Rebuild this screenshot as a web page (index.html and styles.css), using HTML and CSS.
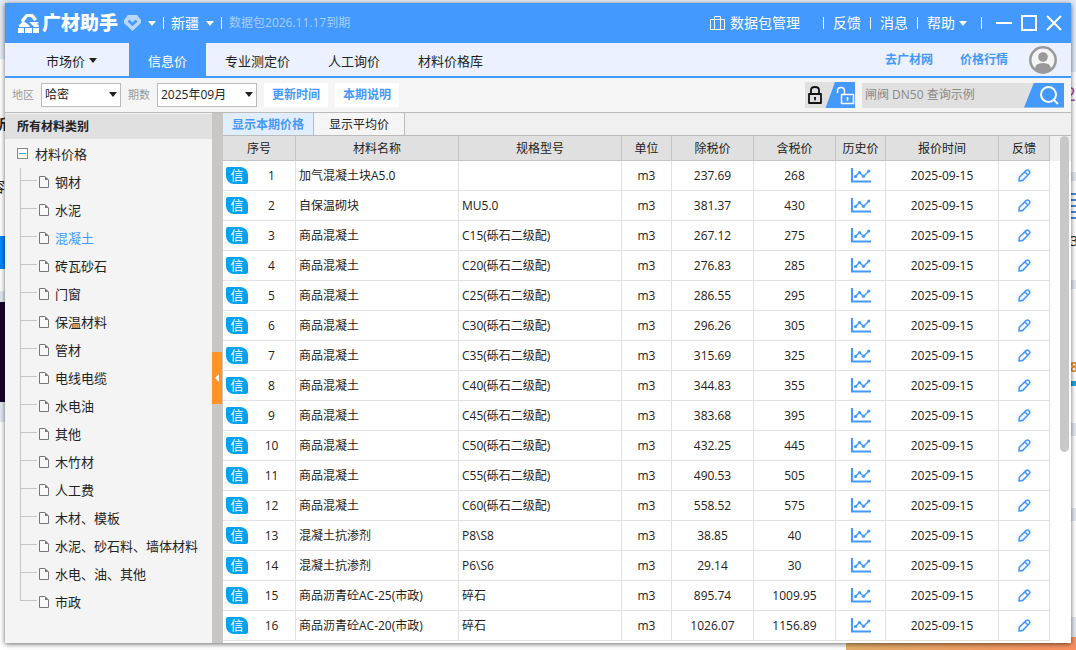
FILE: index.html
```html
<!DOCTYPE html>
<html lang="zh-CN">
<head>
    <meta charset="UTF-8">
    <meta name="viewport" content="width=device-width, initial-scale=1.0">
    <title>广材助手</title>
    <link rel="stylesheet" href="styles.css">
</head>
<body>
    <svg class="sprite" aria-hidden="true">
        <symbol id="i-file" viewBox="0 0 10 12">
            <path d="M.5.5h5.500l3.500 3.500v7.500h-9z" fill="#fff" fill-opacity=".4" stroke="#777"/>
            <path d="M6 .5v3.500h3.500z" fill="#777"/>
        </symbol>
        <symbol id="i-chart" viewBox="0 0 20 15">
            <path d="M1 0v13.500H20" fill="none" stroke="#4499ff" stroke-width="2"/>
            <path d="M4 9l4.500-4.500 4 4L18 3" fill="none" stroke="#4499ff" stroke-width="1.500"/>
            <g fill="#4499ff"><circle cx="4.500" cy="8.500" r="1.600"/><circle cx="8.500" cy="4.500" r="1.600"/><circle cx="12.500" cy="8.300" r="1.600"/><circle cx="17.800" cy="3" r="1.600"/></g>
        </symbol>
        <symbol id="i-pen" viewBox="0 0 13 13">
            <path d="M1 12l.4-3.800L8 1.600Q9.400.4 10.800 1.700 12.500 3.300 11.200 4.800L4.700 11.400zM6.800 3l3 3" fill="none" stroke="#4499ff" stroke-width="1.600" stroke-linejoin="round"/>
        </symbol>
    </svg>

    <!-- pages behind the window -->
    <div class="backdrop" aria-hidden="true">
        <div class="strip strip-left">
            <i class="sky"></i><i class="page"></i><i class="blue"></i><i class="page-sm"></i><i class="gap"></i><i class="dark"></i><i class="gap gap-lg"></i>
            <span class="bit bit-suo">所</span><span class="bit bit-rong">容</span>
        </div>
        <div class="strip strip-right">
            <i class="sky"></i><i class="card-a"></i><i class="gap-sm"></i><i class="card-b"></i><i class="gap-sm"></i><i class="card-c"></i><i class="cyan"></i><i class="card-d"></i><i class="gap-md"></i><i class="card-e"></i><i class="gap-md"></i><i class="card-f"></i><i class="gap-lg"></i>
            <span class="bit bit-two">2</span><span class="bit bit-lines"></span><span class="bit bit-three">3</span><span class="bit bit-eight">8</span>
        </div>
        <div class="banner"></div>
    </div>

    <div class="window">
        <header class="titlebar">
            <svg class="logo-mark" width="22" height="21" viewBox="0 0 22 21" fill="#fff">
                <path d="M8 1h7l4 5-2.500 2L13 4H9.500L6 8.500l5 3.500 1 2H1v-2l3-2.500L3 7z"/>
                <path d="M11 9h10l-4.500 5zM15 14l5-3 1 3zM0 15h6v5H0zM7 15h7v5H7zM15 15h6v5h-6z"/>
            </svg>
            <h1 class="brand">广材助手</h1>
            <svg class="badge" width="17" height="16" viewBox="0 0 17 16">
                <path d="M4 0h9l4 5v3l-8.500 8L0 8V5z" fill="#b9d8ff"/>
                <path d="M4.500 5.500l4 4 4-4" fill="none" stroke="#4499ff" stroke-width="2.500"/>
            </svg>
            <i class="caret"></i>
            <i class="bar"></i>
            <button class="title-btn region">新疆<i class="caret"></i></button>
            <i class="bar"></i>
            <span class="expire">数据包2026.11.17到期</span>
            <button class="title-btn manage">
                <svg width="17" height="16" viewBox="0 0 17 16" fill="none" stroke="#fff"><path d="M1.500 4.500h14v10h-14zM5.500 14.500V1.500h6v13"/></svg>
                数据包管理
            </button>
            <i class="bar"></i>
            <button class="title-btn">反馈</button>
            <i class="bar"></i>
            <button class="title-btn">消息</button>
            <i class="bar"></i>
            <button class="title-btn help">帮助<i class="caret"></i></button>
            <i class="bar"></i>
            <div class="win-controls">
                <button class="title-btn" aria-label="最小化"><svg width="16" height="16" viewBox="0 0 16 16"><path d="M0 8h16" stroke="#fff" stroke-width="2"/></svg></button>
                <button class="title-btn" aria-label="最大化"><svg width="16" height="16" viewBox="0 0 16 16"><path d="M1 1h14v14H1z" fill="none" stroke="#fff" stroke-width="2"/></svg></button>
                <button class="title-btn" aria-label="关闭"><svg width="16" height="16" viewBox="0 0 16 16"><path d="M1 1l14 14M15 1L1 15" stroke="#fff" stroke-width="2"/></svg></button>
            </div>
        </header>

        <nav class="nav">
            <a href="#" class="nav-item market">市场价<i class="caret"></i></a>
            <a href="#" class="nav-item active">信息价</a>
            <a href="#" class="nav-item">专业测定价</a>
            <a href="#" class="nav-item">人工询价</a>
            <a href="#" class="nav-item">材料价格库</a>
            <div class="nav-right">
                <a href="#" class="nav-link">去广材网</a>
                <a href="#" class="nav-link">价格行情</a>
                <svg class="avatar" width="28" height="28" viewBox="0 0 28 28">
                    <circle cx="14" cy="14" r="12.700" fill="#f4f4f4" stroke="#999" stroke-width="2.500"/>
                    <circle cx="14" cy="11" r="4.800" fill="#999"/>
                    <path d="M6 23q0-6 8-6t8 6q-3 4-8 4t-8-4z" fill="#999"/>
                </svg>
            </div>
        </nav>

        <div class="toolbar">
            <label class="field-label" for="area">地区</label>
            <div class="select-wrap area"><select id="area"><option>哈密</option></select><i class="caret"></i></div>
            <label class="field-label" for="period">期数</label>
            <div class="select-wrap period"><select id="period"><option>2025年09月</option></select><i class="caret"></i></div>
            <button class="tool-btn">更新时间</button>
            <button class="tool-btn">本期说明</button>
            <button class="lock-switch" aria-label="锁定">
                <svg width="50" height="26" viewBox="0 0 50 26">
                    <path d="M0 0h30l-9 26H0z" fill="#e0e0e0"/>
                    <path d="M30 0h20v26H20.500z" fill="#4499ff"/>
                    <path d="M4 12h12v9H4zM6 12V8q0-3 4-3t4 3v4" fill="none" stroke="#111" stroke-width="1.800" stroke-linejoin="round"/>
                    <path d="M10 15v3.500M9 16h2" stroke="#111" stroke-width="1.500"/>
                    <path d="M36.500 12.500h12v9h-12zM39.500 12.500V9q0-3.500-3.500-3.500T32.500 9v2" fill="none" stroke="#fff" stroke-width="1.500" stroke-linejoin="round"/>
                    <path d="M42.500 15v4M41.500 16.500h2" stroke="#fff" stroke-width="1.500"/>
                </svg>
            </button>
            <div class="search">
                <input type="text" placeholder="闸阀 DN50 查询示例" aria-label="查询">
                <button class="search-btn" aria-label="搜索">
                    <svg width="20" height="20" viewBox="0 0 20 20" fill="none" stroke="#fff" stroke-width="2"><circle cx="9.500" cy="9.500" r="7.500"/><path d="M14.500 14.500L19 19"/></svg>
                </button>
            </div>
        </div>

        <div class="main">
            <aside class="sidebar">
                <h2 class="side-title">所有材料类别</h2>
                <div class="tree-root"><i class="toggle"></i>材料价格</div>
                <ul class="tree">
                    <li><svg><use href="#i-file"/></svg>钢材</li>
                    <li><svg><use href="#i-file"/></svg>水泥</li>
                    <li class="current"><svg><use href="#i-file"/></svg>混凝土</li>
                    <li><svg><use href="#i-file"/></svg>砖瓦砂石</li>
                    <li><svg><use href="#i-file"/></svg>门窗</li>
                    <li><svg><use href="#i-file"/></svg>保温材料</li>
                    <li><svg><use href="#i-file"/></svg>管材</li>
                    <li><svg><use href="#i-file"/></svg>电线电缆</li>
                    <li><svg><use href="#i-file"/></svg>水电油</li>
                    <li><svg><use href="#i-file"/></svg>其他</li>
                    <li><svg><use href="#i-file"/></svg>木竹材</li>
                    <li><svg><use href="#i-file"/></svg>人工费</li>
                    <li><svg><use href="#i-file"/></svg>木材、模板</li>
                    <li><svg><use href="#i-file"/></svg>水泥、砂石料、墙体材料</li>
                    <li><svg><use href="#i-file"/></svg>水电、油、其他</li>
                    <li><svg><use href="#i-file"/></svg>市政</li>
                </ul>
            </aside>
            <div class="splitter"><button class="collapse" aria-label="收起"></button></div>
            <section class="content">
                <div class="tabs">
                    <button class="tab active">显示本期价格</button>
                    <button class="tab">显示平均价</button>
                </div>
                <div class="table-area">
                    <table class="prices">
                        <colgroup><col class="c-no"><col><col><col class="c-unit"><col class="c-price"><col class="c-price"><col class="c-hist"><col class="c-date"><col class="c-feed"></colgroup>
                        <thead>
                            <tr><th>序号</th><th>材料名称</th><th>规格型号</th><th>单位</th><th>除税价</th><th>含税价</th><th>历史价</th><th>报价时间</th><th>反馈</th></tr>
                        </thead>
                        <tbody>
                            <tr><td><div class="no"><b>信</b><span>1</span></div></td><td>加气混凝土块A5.0</td><td></td><td>m3</td><td>237.69</td><td>268</td><td><svg class="chart"><use href="#i-chart"/></svg></td><td>2025-09-15</td><td><svg class="pen"><use href="#i-pen"/></svg></td></tr>
                            <tr><td><div class="no"><b>信</b><span>2</span></div></td><td>自保温砌块</td><td>MU5.0</td><td>m3</td><td>381.37</td><td>430</td><td><svg class="chart"><use href="#i-chart"/></svg></td><td>2025-09-15</td><td><svg class="pen"><use href="#i-pen"/></svg></td></tr>
                            <tr><td><div class="no"><b>信</b><span>3</span></div></td><td>商品混凝土</td><td>C15(砾石二级配)</td><td>m3</td><td>267.12</td><td>275</td><td><svg class="chart"><use href="#i-chart"/></svg></td><td>2025-09-15</td><td><svg class="pen"><use href="#i-pen"/></svg></td></tr>
                            <tr><td><div class="no"><b>信</b><span>4</span></div></td><td>商品混凝土</td><td>C20(砾石二级配)</td><td>m3</td><td>276.83</td><td>285</td><td><svg class="chart"><use href="#i-chart"/></svg></td><td>2025-09-15</td><td><svg class="pen"><use href="#i-pen"/></svg></td></tr>
                            <tr><td><div class="no"><b>信</b><span>5</span></div></td><td>商品混凝土</td><td>C25(砾石二级配)</td><td>m3</td><td>286.55</td><td>295</td><td><svg class="chart"><use href="#i-chart"/></svg></td><td>2025-09-15</td><td><svg class="pen"><use href="#i-pen"/></svg></td></tr>
                            <tr><td><div class="no"><b>信</b><span>6</span></div></td><td>商品混凝土</td><td>C30(砾石二级配)</td><td>m3</td><td>296.26</td><td>305</td><td><svg class="chart"><use href="#i-chart"/></svg></td><td>2025-09-15</td><td><svg class="pen"><use href="#i-pen"/></svg></td></tr>
                            <tr><td><div class="no"><b>信</b><span>7</span></div></td><td>商品混凝土</td><td>C35(砾石二级配)</td><td>m3</td><td>315.69</td><td>325</td><td><svg class="chart"><use href="#i-chart"/></svg></td><td>2025-09-15</td><td><svg class="pen"><use href="#i-pen"/></svg></td></tr>
                            <tr><td><div class="no"><b>信</b><span>8</span></div></td><td>商品混凝土</td><td>C40(砾石二级配)</td><td>m3</td><td>344.83</td><td>355</td><td><svg class="chart"><use href="#i-chart"/></svg></td><td>2025-09-15</td><td><svg class="pen"><use href="#i-pen"/></svg></td></tr>
                            <tr><td><div class="no"><b>信</b><span>9</span></div></td><td>商品混凝土</td><td>C45(砾石二级配)</td><td>m3</td><td>383.68</td><td>395</td><td><svg class="chart"><use href="#i-chart"/></svg></td><td>2025-09-15</td><td><svg class="pen"><use href="#i-pen"/></svg></td></tr>
                            <tr><td><div class="no"><b>信</b><span>10</span></div></td><td>商品混凝土</td><td>C50(砾石二级配)</td><td>m3</td><td>432.25</td><td>445</td><td><svg class="chart"><use href="#i-chart"/></svg></td><td>2025-09-15</td><td><svg class="pen"><use href="#i-pen"/></svg></td></tr>
                            <tr><td><div class="no"><b>信</b><span>11</span></div></td><td>商品混凝土</td><td>C55(砾石二级配)</td><td>m3</td><td>490.53</td><td>505</td><td><svg class="chart"><use href="#i-chart"/></svg></td><td>2025-09-15</td><td><svg class="pen"><use href="#i-pen"/></svg></td></tr>
                            <tr><td><div class="no"><b>信</b><span>12</span></div></td><td>商品混凝土</td><td>C60(砾石二级配)</td><td>m3</td><td>558.52</td><td>575</td><td><svg class="chart"><use href="#i-chart"/></svg></td><td>2025-09-15</td><td><svg class="pen"><use href="#i-pen"/></svg></td></tr>
                            <tr><td><div class="no"><b>信</b><span>13</span></div></td><td>混凝土抗渗剂</td><td>P8\S8</td><td>m3</td><td>38.85</td><td>40</td><td><svg class="chart"><use href="#i-chart"/></svg></td><td>2025-09-15</td><td><svg class="pen"><use href="#i-pen"/></svg></td></tr>
                            <tr><td><div class="no"><b>信</b><span>14</span></div></td><td>混凝土抗渗剂</td><td>P6\S6</td><td>m3</td><td>29.14</td><td>30</td><td><svg class="chart"><use href="#i-chart"/></svg></td><td>2025-09-15</td><td><svg class="pen"><use href="#i-pen"/></svg></td></tr>
                            <tr><td><div class="no"><b>信</b><span>15</span></div></td><td>商品沥青砼AC-25(市政)</td><td>碎石</td><td>m3</td><td>895.74</td><td>1009.95</td><td><svg class="chart"><use href="#i-chart"/></svg></td><td>2025-09-15</td><td><svg class="pen"><use href="#i-pen"/></svg></td></tr>
                            <tr><td><div class="no"><b>信</b><span>16</span></div></td><td>商品沥青砼AC-20(市政)</td><td>碎石</td><td>m3</td><td>1026.07</td><td>1156.89</td><td><svg class="chart"><use href="#i-chart"/></svg></td><td>2025-09-15</td><td><svg class="pen"><use href="#i-pen"/></svg></td></tr>
                        </tbody>
                    </table>
                    <div class="scroll-gutter"><div class="thumb"></div></div>
                </div>
            </section>
        </div>
    </div>
</body>
</html>
```

FILE: styles.css
```css
* {
    margin: 0;
    padding: 0;
    box-sizing: border-box;
}

body {
    height: 100vh;
    padding: 3px 5px 7px;
    display: flex;
    background: #fff;
    overflow: hidden;
    font-family: 'Open Sans', 'Noto Sans CJK SC', sans-serif;
    font-size: 12px;
    line-height: 20px;
    color: #222;
}

button,
input,
select {
    font: inherit;
    color: inherit;
    border: none;
    border-radius: 0;
    background: none;
}

a {
    color: inherit;
    text-decoration: none;
}

svg {
    display: block;
    flex: none;
}

.sprite {
    position: absolute;
    width: 0;
    height: 0;
}

.caret {
    flex: none;
    border: 4px solid transparent;
    border-top: 5px solid currentColor;
    border-bottom: 0;
}

/* backdrop */
.backdrop {
    position: absolute;
    inset: 0;
    background: linear-gradient(#e4ebf7 0 60px, #fff 60px);
}

.strip {
    position: absolute;
    top: 0;
    bottom: 0;
    width: 5px;
    overflow: hidden;
}

.strip i {
    display: block;
}

.strip-left { left: 0; }
.strip-left .sky { height: 59px; background: #e4ebf5; }
.strip-left .page { height: 177px; background: #fff; }
.strip-left .blue { height: 33px; background: #0084ff; }
.strip-left .page-sm { height: 22px; background: #fff; }
.strip-left .gap { height: 11px; background: #e2e7f0; }
.strip-left .dark { height: 100px; background: #14052c; }
.strip-left .gap-lg { height: 20px; }

.strip-right { right: 0; }
.strip-right .sky { height: 72px; background: #e2eaf7; }
.strip-right .card-a { height: 100px; background: #fff; }
.strip-right .gap-sm { height: 9px; background: #e2e7f0; }
.strip-right .card-b { height: 99px; background: #fff; }
.strip-right .card-c { height: 92px; background: #fff; }
.strip-right .cyan { height: 5px; background: #1ba8e0; }
.strip-right .card-d { height: 37px; background: #fff; }
.strip-right .gap-md { height: 13px; background: #e2e7f0; }
.strip-right .card-e { height: 72px; background: #fff; }
.strip-right .card-f { height: 96px; background: #fff; }
.strip-right .gap-lg { height: 33px; background: #e2e7f0; }

.bit { position: absolute; font-size: 14px; }
.bit-suo { right: -2px; top: 114px; font-weight: bold; }
.bit-rong { right: 0; top: 177px; }
.bit-two { right: 0; top: 84px; font-size: 20px; color: #a848b0; }
.bit-lines {
    top: 193px;
    width: 5px;
    height: 26px;
    background: repeating-linear-gradient(#4a86d8 0 2px, #fff 2px 6px);
}
.bit-three { right: -2px; top: 231px; }
.bit-eight { right: -2px; top: 357px; color: #e89030; font-weight: bold; }

.banner {
    position: absolute;
    right: 0;
    bottom: 0;
    width: 230px;
    height: 13px;
    background: linear-gradient(90deg, #e2ae68, #fa905f);
}

/* window */
.window {
    position: relative;
    flex: 1;
    min-width: 0;
    display: flex;
    flex-direction: column;
    background: #f4f4f4;
    box-shadow: 0 1px 5px rgba(0, 0, 0, 0.6);
}

.titlebar {
    flex: none;
    height: 40px;
    padding: 0 9px 0 13px;
    display: flex;
    align-items: center;
    background: #4499ff;
    color: #fff;
}

.brand {
    margin-right: 6px;
    font-size: 19px;
    line-height: 24px;
    font-weight: 900;
}

.logo-mark {
    margin-right: 2px;
}

.badge {
    margin-right: 7px;
}

.bar {
    flex: none;
    width: 1px;
    height: 12px;
    margin: 0 7px;
    background: #fff;
}

.title-btn {
    display: flex;
    align-items: center;
    gap: 7px;
    font-size: 14px;
    color: #fff;
}

.expire {
    margin-right: auto;
    color: #a5cfff;
}

.manage {
    gap: 4px;
    margin-right: 14px;
}

.titlebar .manage ~ .bar {
    margin: 0 9px;
}

.title-btn.help {
    gap: 4px;
    margin-right: 5px;
}

.win-controls {
    display: flex;
    gap: 9px;
    margin-left: 5px;
}

.nav {
    flex: none;
    height: 35px;
    display: flex;
    background: #ebf1ff;
    border-bottom: 2px solid #4499ff;
    font-size: 13px;
}

.nav-item {
    display: flex;
    align-items: center;
    padding: 2px 19px 0;
}

.nav-item.market {
    gap: 4px;
    padding-left: 41px;
    padding-right: 32px;
}

.nav-item.active {
    background: #4499ff;
    color: #fff;
}

.nav-right {
    margin-left: auto;
    padding-right: 14px;
    display: flex;
    align-items: center;
    gap: 27px;
    font-size: 12px;
}

.nav-link {
    font-weight: bold;
    color: #4499ff;
}

.avatar {
    margin-left: -6px;
}

.toolbar {
    flex: none;
    height: 35px;
    padding: 0 7px;
    display: flex;
    align-items: center;
    gap: 7px;
    background: #f5f5f5;
    border-bottom: 1px solid #bbb;
}

.field-label {
    font-size: 11px;
    color: #999;
}

.select-wrap {
    position: relative;
    height: 24px;
}

.select-wrap select {
    width: 100%;
    height: 100%;
    padding: 0 3px;
    appearance: none;
    background: #fff;
    border: 1px solid #bbb;
}

.select-wrap .caret {
    position: absolute;
    right: 4px;
    top: 9px;
    pointer-events: none;
}

.area { width: 80px; }
.period { width: 100px; }

.tool-btn {
    height: 24px;
    padding: 0 8px;
    background: #fff;
    color: #4499ff;
    font-weight: bold;
}

.lock-switch {
    margin-left: auto;
}

.search {
    display: flex;
    width: 202px;
    height: 25px;
    background: #e0e0e0;
}

.search input {
    flex: 1;
    min-width: 0;
    padding: 0 3px;
    outline: none;
}

.search input::placeholder {
    color: #888;
}

.search-btn {
    width: 40px;
    padding-left: 15px;
    background: #4499ff;
    clip-path: polygon(10px 0, 100% 0, 100% 100%, 0 100%);
}

/* body */
.main {
    flex: 1;
    min-height: 0;
    display: flex;
}

.sidebar {
    flex: none;
    width: 207px;
    padding-top: 1px;
    overflow: hidden;
    font-size: 13px;
}

.side-title {
    height: 25px;
    padding-left: 12px;
    background: #e0e0e0;
    font-size: 12px;
    line-height: 25px;
}

.tree-root {
    height: 29px;
    padding-left: 12px;
    display: flex;
    align-items: center;
    gap: 7px;
}

.toggle {
    width: 11px;
    height: 11px;
    border: 1px solid #888;
    background: linear-gradient(#29a8d8, #29a8d8) center / 7px 1px no-repeat #fff;
}

.tree {
    padding-left: 15px;
    list-style: none;
}

.tree li {
    height: 28px;
    display: flex;
    align-items: center;
    gap: 6px;
    background:
        linear-gradient(#c4c4c4, #c4c4c4) 0 0 / 1px 100% no-repeat,
        linear-gradient(#c4c4c4, #c4c4c4) 0 12px / 17px 1px no-repeat;
    padding-left: 19px;
}

.tree li:last-child {
    background-size: 1px 12px, 17px 1px;
}

.tree svg {
    width: 10px;
    height: 12px;
}

.tree .current {
    color: #4499ff;
}

.splitter {
    flex: none;
    width: 11px;
    display: flex;
    align-items: center;
    background: #c8c7c5;
}

.collapse {
    width: 10px;
    height: 52px;
    display: flex;
    align-items: center;
    justify-content: center;
    background: #ff9326;
}

.collapse::before {
    content: '';
    border: 4px solid transparent;
    border-right-color: #fff;
    border-left: 0;
}

.content {
    flex: 1;
    min-width: 0;
    display: flex;
    flex-direction: column;
    background: #fff;
}

.tabs {
    flex: none;
    height: 23px;
    display: flex;
    background: #f0f0f0;
    border-bottom: 1px solid #bbb;
}

.tab {
    min-width: 91px;
    padding: 2px 9px 0;
    border-right: 1px solid #bbb;
    background: #f5f5f5;
}

.tab.active {
    background: #e1eeff;
    color: #4499ff;
    font-weight: bold;
}

.table-area {
    flex: 1;
    min-height: 0;
    display: flex;
    overflow: hidden;
}

.prices {
    flex: 1;
    width: 100%;
    min-width: 0;
    align-self: flex-start;
    table-layout: fixed;
    border-collapse: separate;
    border-spacing: 0;
    text-align: center;
}

.c-no { width: 73px; }
.c-unit { width: 50px; }
.c-price { width: 82px; }
.c-hist { width: 50px; }
.c-date { width: 113px; }
.c-feed { width: 51px; }

.prices th {
    height: 25px;
    padding-top: 2px;
    background: #e0e0e0;
    border-right: 1px solid #c4c4c4;
    border-bottom: 1px solid #c4c4c4;
    font-weight: normal;
}

.prices td {
    height: 30px;
    border-right: 1px solid #e2e2e2;
    border-bottom: 1px solid #e2e2e2;
    white-space: nowrap;
}

.prices td:nth-child(2),
.prices td:nth-child(3) {
    padding-left: 3px;
    text-align: left;
}

.no {
    display: flex;
    align-items: center;
    padding-left: 3px;
}

.no b {
    width: 22px;
    height: 17px;
    border-radius: 2px 8px 2px 8px;
    background: #00a2f2;
    color: #fff;
    font-weight: normal;
    font-size: 13px;
    line-height: 17px;
}

.no span {
    width: 47px;
}

.chart {
    width: 20px;
    height: 15px;
    margin: 0 auto;
}

.pen {
    width: 13px;
    height: 13px;
    margin: 0 auto;
}

.scroll-gutter {
    flex: none;
    width: 21px;
    padding-left: 10px;
    background: linear-gradient(#f0f0f0 25px, #fff 25px);
}

.thumb {
    width: 9px;
    height: 316px;
    border-radius: 5px;
    background: #c8c8c8;
}
```
